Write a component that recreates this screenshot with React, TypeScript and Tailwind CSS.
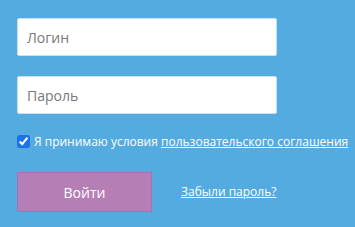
import React from "react";

export default function App() {
  return (
    <div className="w-[355px] h-[227px] bg-[#53abe0] pt-[18px] pl-[17px] font-['Open_Sans',sans-serif]">
      <div className="flex flex-col gap-[20px] w-[260px]">
        <input
          autoFocus
          placeholder="Логин"
          className="h-[38px] w-full bg-white border border-[#c9dff0] rounded-[2px] px-[9px] text-[14px] text-[#555] placeholder:text-[#777] outline-none caret-black"
        />
        <input
          type="password"
          placeholder="Пароль"
          className="h-[38px] w-full bg-white border border-[#c9dff0] rounded-[2px] px-[9px] text-[14px] text-[#555] placeholder:text-[#777] outline-none"
        />
      </div>
      <label className="flex items-center mt-[21px] text-[12px] text-white leading-none whitespace-nowrap">
        <input type="checkbox" defaultChecked className="w-[13px] h-[13px] m-0 mr-[4px] accent-[#1a73e8]" />
        <span>
          Я принимаю условия <a href="#" className="underline">пользовательского соглашения</a>
        </span>
      </label>
      <div className="flex items-center mt-[24px]">
        <button className="w-[135px] h-[40px] bg-[#b57fb6] border border-[#a870b8] text-white text-[14px]">
          Войти
        </button>
        <a href="#" className="ml-[29px] text-white text-[12px] underline">
          Забыли пароль?
        </a>
      </div>
    </div>
  );
}
